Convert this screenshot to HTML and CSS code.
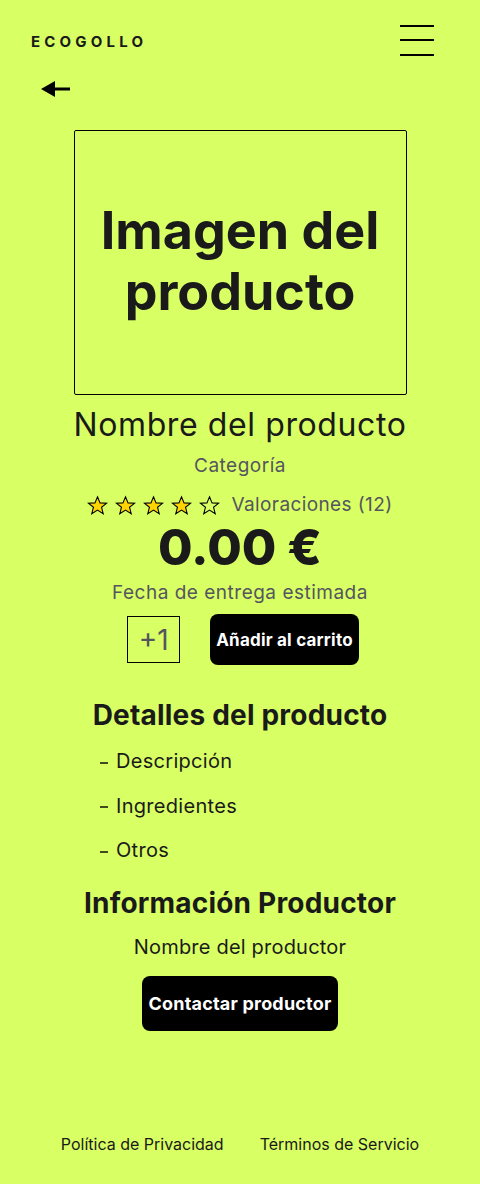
FILE: index.html
```html
<!DOCTYPE html>
<html lang="es">
<head>
<meta charset="utf-8">
<title>Ecogollo - Producto</title>
<link rel="stylesheet" href="styles.css">
</head>
<body>
<div class="page">
  <header class="topbar">
    <div class="logo">ECOGOLLO</div>
    <button class="menu" aria-label="Menú">
      <span></span><span></span><span></span>
    </button>
  </header>
  <div class="backrow">
    <svg class="back" width="30" height="18" viewBox="0 0 30 18"><polygon points="0,9 14,1 14,17" fill="#000"/><rect x="12" y="7.5" width="17" height="3" fill="#000"/></svg>
  </div>
  <main class="product">
    <div class="image-box"><span>Imagen del producto</span></div>
    <h1 class="name">Nombre del producto</h1>
    <div class="category">Categoría</div>
    <div class="rating">
      <div class="stars">
        <svg viewBox="0 0 24 24" class="star"><polygon points="12,2 14.9,9 22.5,9.3 16.6,14 18.6,21.5 12,17.3 5.4,21.5 7.4,14 1.5,9.3 9.1,9" fill="#ffd400" stroke="#000" stroke-width="1.2"/></svg>
        <svg viewBox="0 0 24 24" class="star"><polygon points="12,2 14.9,9 22.5,9.3 16.6,14 18.6,21.5 12,17.3 5.4,21.5 7.4,14 1.5,9.3 9.1,9" fill="#ffd400" stroke="#000" stroke-width="1.2"/></svg>
        <svg viewBox="0 0 24 24" class="star"><polygon points="12,2 14.9,9 22.5,9.3 16.6,14 18.6,21.5 12,17.3 5.4,21.5 7.4,14 1.5,9.3 9.1,9" fill="#ffd400" stroke="#000" stroke-width="1.2"/></svg>
        <svg viewBox="0 0 24 24" class="star"><polygon points="12,2 14.9,9 22.5,9.3 16.6,14 18.6,21.5 12,17.3 5.4,21.5 7.4,14 1.5,9.3 9.1,9" fill="#ffd400" stroke="#000" stroke-width="1.2"/></svg>
        <svg viewBox="0 0 24 24" class="star"><polygon points="12,2 14.9,9 22.5,9.3 16.6,14 18.6,21.5 12,17.3 5.4,21.5 7.4,14 1.5,9.3 9.1,9" fill="none" stroke="#000" stroke-width="1.2"/></svg>
      </div>
      <span class="reviews">Valoraciones (12)</span>
    </div>
    <div class="price">0.00 €</div>
    <div class="delivery">Fecha de entrega estimada</div>
    <div class="buy">
      <div class="qty">+1</div>
      <button class="btn">Añadir al carrito</button>
    </div>
    <section class="details">
      <h2>Detalles del producto</h2>
      <ul>
        <li>Descripción</li>
        <li>Ingredientes</li>
        <li>Otros</li>
      </ul>
    </section>
    <section class="producer">
      <h2>Información Productor</h2>
      <p>Nombre del productor</p>
      <button class="btn contact">Contactar productor</button>
    </section>
  </main>
  <footer class="footer">
    <a href="#">Política de Privacidad</a>
    <a href="#">Términos de Servicio</a>
  </footer>
</div>
</body>
</html>
```
FILE: styles.css
```css
* { box-sizing: border-box; }
html, body { margin: 0; padding: 0; }
body {
  background: #d8ff63;
  font-family: Inter, "Noto Sans", sans-serif;
  color: #1a1a1a;
}
.page {
  width: 480px;
  height: 1184px;
  display: flex;
  flex-direction: column;
}
.topbar {
  display: flex;
  justify-content: space-between;
  align-items: center;
  padding: 24px 46px 0 31px;
  height: 58px;
}
.logo {
  font-weight: 700;
  font-size: 15px;
  letter-spacing: 4.2px;
  color: #1a1a1a;
  margin-top: 1px;
}
.menu {
  width: 34px;
  height: 31px;
  padding: 0;
  border: 0;
  background: transparent;
  display: flex;
  flex-direction: column;
  justify-content: space-between;
  margin-top: -2px;
}
.menu span {
  display: block;
  height: 2px;
  background: #000;
}
.backrow {
  padding: 22px 0 0 41px;
  height: 72px;
}
.back { display: block; }
.product {
  display: flex;
  flex-direction: column;
  align-items: center;
}
.image-box {
  width: 333px;
  height: 265px;
  border: 1px solid #000;
  border-radius: 2px;
  display: flex;
  align-items: center;
  justify-content: center;
  text-align: center;
  font-weight: 700;
  font-size: 52px;
  line-height: 61px;
  letter-spacing: 0;
  padding: 0 10px 4px;
}
.name {
  margin: 12px 0 0;
  font-weight: 400;
  font-size: 32px;
  line-height: 36px;
  letter-spacing: 0.6px;
}
.category {
  margin-top: 12px;
  font-size: 19px;
  line-height: 22px;
  letter-spacing: 0.5px;
  color: #555560;
}
.rating {
  display: flex;
  align-items: center;
  margin-top: 17px;
  gap: 11px;
}
.stars { display: flex; gap: 7px; }
.star { width: 21px; height: 21px; display: block; }
.reviews { font-size: 19px; letter-spacing: 0.4px; color: #555560; line-height: 22px; }
.price {
  font-weight: 800;
  font-size: 50px;
  line-height: 50px;
  margin-top: 6px;
}
.delivery {
  font-size: 19px;
  letter-spacing: 0.5px;
  color: #555560;
  line-height: 22px;
  margin-top: 10px;
}
.buy {
  display: flex;
  align-items: center;
  gap: 30px;
  margin-top: 10px;
  margin-left: 6px;
}
.qty {
  width: 53px;
  height: 47px;
  border: 1px solid #000;
  display: flex;
  align-items: center;
  justify-content: center;
  font-size: 28px;
  color: #555560;
}
.btn {
  background: #000;
  color: #fff;
  border: 0;
  border-radius: 8px;
  font-family: Inter, "Noto Sans", sans-serif;
  font-weight: 700;
  font-size: 17px;
  letter-spacing: 0.2px;
  height: 51px;
  padding: 0 6px;
}
.details {
  width: 100%;
  margin-top: 34px;
}
.details h2, .producer h2 {
  margin: 0;
  text-align: center;
  font-weight: 700;
  font-size: 28px;
  line-height: 32px;
  letter-spacing: 0.2px;
}
.details ul {
  list-style: none;
  margin: 18px 0 0;
  padding: 0 0 0 100px;
}
.details li {
  font-size: 20px;
  letter-spacing: 0.3px;
  line-height: 25px;
  margin-bottom: 19.5px;
  display: flex;
  align-items: center;
}
.details li::before {
  content: "";
  width: 8px;
  height: 2px;
  background: rgba(0, 0, 0, 0.7);
  margin-right: 8px;
  margin-top: 2px;
}
.producer {
  display: flex;
  flex-direction: column;
  align-items: center;
  margin-top: 4px;
}
.producer h2 { font-size: 28px; letter-spacing: 0.2px; }
.producer p {
  margin: 16px 0 0;
  font-size: 20px;
  letter-spacing: 0.2px;
  line-height: 24px;
}
.contact {
  margin-top: 17px;
  height: 55px;
  padding: 0 6px;
  font-size: 18px;
}
.footer {
  margin-top: auto;
  display: flex;
  justify-content: center;
  gap: 36px;
  padding-bottom: 30px;
}
.footer a {
  color: #1a1a1a;
  text-decoration: none;
  font-size: 16px;
  line-height: 20px;
}
```
